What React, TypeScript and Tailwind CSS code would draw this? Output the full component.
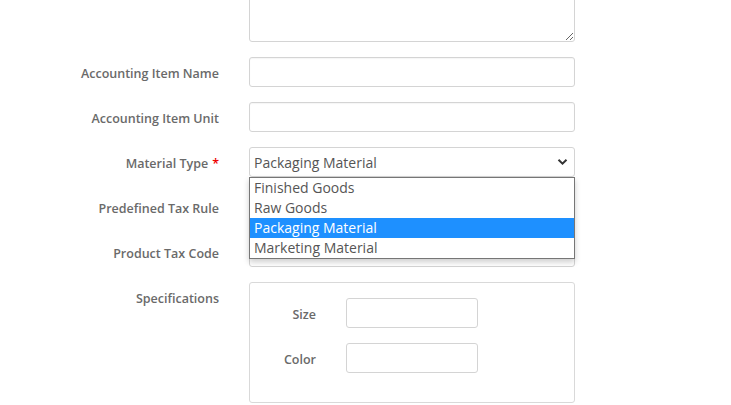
import React from "react";

const font = { fontFamily: '"Open Sans", "Noto Sans", sans-serif' };

function Label({ text, required }: { text: string; required?: boolean }) {
  return (
    <div className="w-[219px] shrink-0 text-right pt-[8px] text-[12.5px] leading-[17px] font-semibold text-[#6a6a6a]">
      {text}
      {required && <span className="text-[#e00] ml-[4px]">*</span>}
    </div>
  );
}

function Input() {
  return (
    <input
      type="text"
      className="w-[326px] h-[30px] border border-[#d4d4d4] rounded-[3px] bg-white shadow-[inset_0_1px_1px_rgba(0,0,0,0.04)] outline-none"
    />
  );
}

export default function App() {
  const options = ["Finished Goods", "Raw Goods", "Packaging Material", "Marketing Material"];
  return (
    <div className="w-[731px] h-[405px] overflow-hidden bg-white" style={font}>
      <div className="flex flex-col gap-[15px]">
        <div className="flex gap-[30px]">
          <div className="w-[219px] shrink-0" />
          <textarea className="w-[326px] h-[82px] -mt-[40px] border border-[#d4d4d4] rounded-[3px] bg-white outline-none" />
        </div>
        <div className="flex gap-[30px]">
          <Label text="Accounting Item Name" />
          <Input />
        </div>
        <div className="flex gap-[30px]">
          <Label text="Accounting Item Unit" />
          <Input />
        </div>
        <div className="flex gap-[30px] relative z-10">
          <Label text="Material Type" required />
          <div className="relative w-[326px]">
            <div className="w-[326px] h-[30px] border border-[#d4d4d4] rounded-[3px] bg-white flex items-center justify-between pl-[4px] pr-[6px] text-[14px] text-[#555]">
              <span>Packaging Material</span>
              <svg width="11" height="8" viewBox="0 0 11 8">
                <path d="M1.5 1.8 L5.5 5.6 L9.5 1.8" fill="none" stroke="#333" strokeWidth="2" />
              </svg>
            </div>
            <div className="absolute left-0 top-[30px] w-[326px] border border-[#767676] bg-white shadow-[0_3px_6px_rgba(0,0,0,0.2)] flex flex-col">
              {options.map((o) => (
                <div
                  key={o}
                  className={
                    "h-[20px] leading-[20px] pl-[4px] text-[14px] " +
                    (o === "Packaging Material" ? "bg-[#1e90ff] text-white" : "text-[#555]")
                  }
                >
                  {o}
                </div>
              ))}
            </div>
          </div>
        </div>
        <div className="flex gap-[30px]">
          <Label text="Predefined Tax Rule" />
          <Input />
        </div>
        <div className="flex gap-[30px]">
          <Label text="Product Tax Code" />
          <Input />
        </div>
        <div className="flex gap-[30px]">
          <Label text="Specifications" />
          <div className="w-[326px] h-[121px] border border-[#d9d9d9] rounded-[3px] pt-[15px] flex flex-col gap-[15px]">
            <div className="flex gap-[30px]">
              <div className="w-[66px] shrink-0 text-right pt-[8px] text-[12.5px] leading-[17px] font-semibold text-[#6a6a6a]">Size</div>
              <input className="w-[132px] h-[30px] border border-[#d4d4d4] rounded-[3px] outline-none" />
            </div>
            <div className="flex gap-[30px]">
              <div className="w-[66px] shrink-0 text-right pt-[8px] text-[12.5px] leading-[17px] font-semibold text-[#6a6a6a]">Color</div>
              <input className="w-[132px] h-[30px] border border-[#d4d4d4] rounded-[3px] outline-none" />
            </div>
          </div>
        </div>
      </div>
    </div>
  );
}
